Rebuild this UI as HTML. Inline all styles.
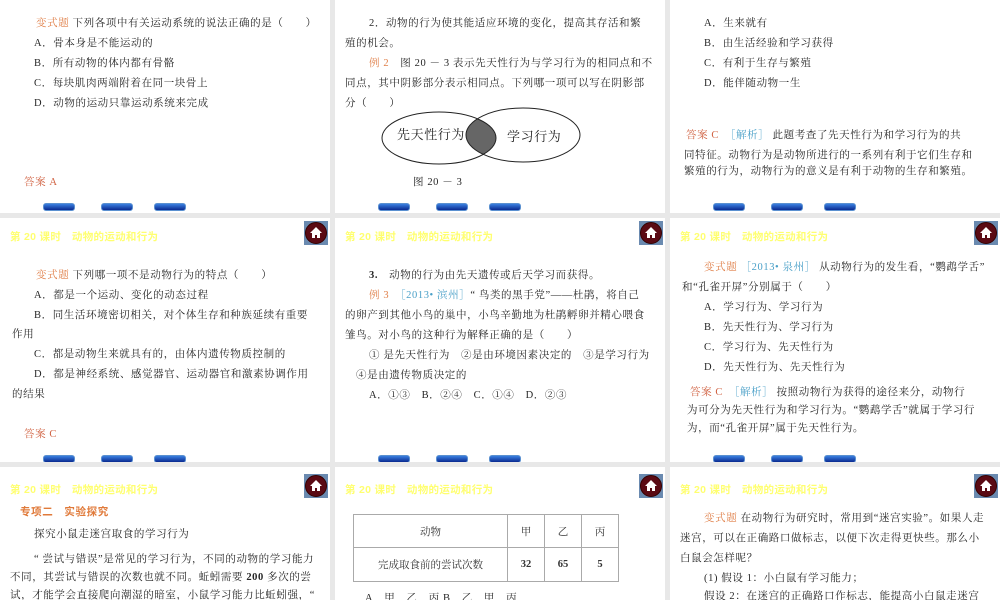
<!DOCTYPE html>
<html><head><meta charset="utf-8"><style>
*{margin:0;padding:0;box-sizing:border-box}
body{width:1000px;height:600px;background:#e8e8e8;position:relative;overflow:hidden;font-family:"Liberation Serif","Noto Serif CJK SC","Noto Sans CJK SC",serif;color:#262626}
.s{position:absolute;background:#fff;overflow:hidden}
.t{position:absolute;font-size:10.5px;letter-spacing:0.6px;white-space:nowrap;line-height:14px}
.o{color:#e0804a}
.b{color:#4aa0c8}
.r{color:#d06040}
.h{position:absolute;font-size:10.5px;color:#ffff70;font-family:"Liberation Sans","Noto Sans CJK SC",sans-serif;white-space:nowrap;font-weight:bold;letter-spacing:0.3px}
.btn{position:absolute;width:32px;height:8px;border-radius:3px;background:linear-gradient(#3a7fe0,#0a2a90);border:1px solid #5a90d0}
.home{position:absolute;width:24px;height:24px;background:#6a8ab0}
.home i{position:absolute;left:1px;top:1px;width:22px;height:22px;border-radius:50%;background:#5a0a14;border:1px solid #300}
.home svg{position:absolute;left:5px;top:5px}
</style></head><body>

<!-- Row 1 -->
<div class="s" style="left:0;top:0;width:330px;height:213px">
<div class="t" style="left:36px;top:17px"><span class="o">变式题</span> 下列各项中有关运动系统的说法正确的是（　　）</div>
<div class="t" style="left:34px;top:37px">A．骨本身是不能运动的</div>
<div class="t" style="left:34px;top:57px">B．所有动物的体内都有骨骼</div>
<div class="t" style="left:34px;top:77px">C．每块肌肉两端附着在同一块骨上</div>
<div class="t" style="left:34px;top:97px">D．动物的运动只靠运动系统来完成</div>
<div class="t r" style="left:24px;top:176px">答案 A</div>
<div class="btn" style="left:43px;top:203px"></div><div class="btn" style="left:101px;top:203px"></div><div class="btn" style="left:154px;top:203px"></div>
</div>

<div class="s" style="left:335px;top:0;width:330px;height:213px">
<div class="t" style="left:34px;top:17px">2．动物的行为使其能适应环境的变化，提高其存活和繁</div>
<div class="t" style="left:10px;top:37px">殖的机会。</div>
<div class="t" style="left:34px;top:57px"><span class="o">例 2</span>　图 20 － 3 表示先天性行为与学习行为的相同点和不</div>
<div class="t" style="left:10px;top:77px">同点，其中阴影部分表示相同点。下列哪一项可以写在阴影部</div>
<div class="t" style="left:10px;top:97px">分（　　）</div>
<svg style="position:absolute;left:0;top:0" width="330" height="213">
<defs><clipPath id="c"><ellipse cx="104" cy="138" rx="57" ry="26"/></clipPath></defs>
<ellipse cx="188" cy="135" rx="57" ry="27" fill="#666" clip-path="url(#c)"/>
<ellipse cx="104" cy="138" rx="57" ry="26" fill="none" stroke="#222" stroke-width="1"/>
<ellipse cx="188" cy="135" rx="57" ry="27" fill="none" stroke="#222" stroke-width="1"/>
</svg>
<div class="t" style="left:62px;top:128px;font-size:13px">先天性行为</div>
<div class="t" style="left:172px;top:130px;font-size:13px">学习行为</div>
<div class="t" style="left:78px;top:176px">图 20 － 3</div>
<div class="btn" style="left:43px;top:203px"></div><div class="btn" style="left:101px;top:203px"></div><div class="btn" style="left:154px;top:203px"></div>
</div>

<div class="s" style="left:670px;top:0;width:330px;height:213px">
<div class="t" style="left:34px;top:17px">A．生来就有</div>
<div class="t" style="left:34px;top:37px">B．由生活经验和学习获得</div>
<div class="t" style="left:34px;top:57px">C．有利于生存与繁殖</div>
<div class="t" style="left:34px;top:77px">D．能伴随动物一生</div>
<div class="t" style="left:16px;top:129px"><span class="r">答案 C</span>　<span class="b">［解析］</span> 此题考查了先天性行为和学习行为的共</div>
<div class="t" style="left:14px;top:149px">同特征。动物行为是动物所进行的一系列有利于它们生存和</div>
<div class="t" style="left:14px;top:165px">繁殖的行为，动物行为的意义是有利于动物的生存和繁殖。</div>
<div class="btn" style="left:43px;top:203px"></div><div class="btn" style="left:101px;top:203px"></div><div class="btn" style="left:154px;top:203px"></div>
</div>

<!-- Row 2 -->
<div class="s" style="left:0;top:218px;width:330px;height:244px">
<div class="h" style="left:10px;top:11px">第 20 课时　动物的运动和行为</div>
<div class="home" style="left:304px;top:3px"><i></i><svg width="14" height="13" viewBox="0 0 14 13"><path d="M7 1 L1 7 H3 V12 H6 V9 H8 V12 H11 V7 H13 Z" fill="#fff"/></svg></div>
<div class="t" style="left:36px;top:51px"><span class="o">变式题</span> 下列哪一项不是动物行为的特点（　　）</div>
<div class="t" style="left:34px;top:71px">A．都是一个运动、变化的动态过程</div>
<div class="t" style="left:34px;top:91px">B．同生活环境密切相关，对个体生存和种族延续有重要</div>
<div class="t" style="left:12px;top:110px">作用</div>
<div class="t" style="left:34px;top:130px">C．都是动物生来就具有的，由体内遗传物质控制的</div>
<div class="t" style="left:34px;top:150px">D．都是神经系统、感觉器官、运动器官和激素协调作用</div>
<div class="t" style="left:12px;top:170px">的结果</div>
<div class="t r" style="left:24px;top:210px">答案 C</div>
<div class="btn" style="left:43px;top:237px"></div><div class="btn" style="left:101px;top:237px"></div><div class="btn" style="left:154px;top:237px"></div>
</div>

<div class="s" style="left:335px;top:218px;width:330px;height:244px">
<div class="h" style="left:10px;top:11px">第 20 课时　动物的运动和行为</div>
<div class="home" style="left:304px;top:3px"><i></i><svg width="14" height="13" viewBox="0 0 14 13"><path d="M7 1 L1 7 H3 V12 H6 V9 H8 V12 H11 V7 H13 Z" fill="#fff"/></svg></div>
<div class="t" style="left:34px;top:51px"><b>3.</b>　动物的行为由先天遗传或后天学习而获得。</div>
<div class="t" style="left:34px;top:71px"><span class="o">例 3</span>　<span class="b">［2013• 滨州］</span>“ 鸟类的黑手党”——杜鹃，将自己</div>
<div class="t" style="left:10px;top:91px">的卵产到其他小鸟的巢中，小鸟辛勤地为杜鹃孵卵并精心喂食</div>
<div class="t" style="left:10px;top:111px">雏鸟。对小鸟的这种行为解释正确的是（　　）</div>
<div class="t" style="left:34px;top:131px">① 是先天性行为　②是由环境因素决定的　③是学习行为</div>
<div class="t" style="left:21px;top:151px">④是由遗传物质决定的</div>
<div class="t" style="left:34px;top:171px">A．①③　B．②④　C．①④　D．②③</div>
<div class="btn" style="left:43px;top:237px"></div><div class="btn" style="left:101px;top:237px"></div><div class="btn" style="left:154px;top:237px"></div>
</div>

<div class="s" style="left:670px;top:218px;width:330px;height:244px">
<div class="h" style="left:10px;top:11px">第 20 课时　动物的运动和行为</div>
<div class="home" style="left:304px;top:3px"><i></i><svg width="14" height="13" viewBox="0 0 14 13"><path d="M7 1 L1 7 H3 V12 H6 V9 H8 V12 H11 V7 H13 Z" fill="#fff"/></svg></div>
<div class="t" style="left:34px;top:43px"><span class="o">变式题</span> <span class="b">［2013• 泉州］</span> 从动物行为的发生看，“鹦鹉学舌”</div>
<div class="t" style="left:12px;top:63px">和“孔雀开屏”分别属于（　　）</div>
<div class="t" style="left:34px;top:83px">A．学习行为、学习行为</div>
<div class="t" style="left:34px;top:103px">B．先天性行为、学习行为</div>
<div class="t" style="left:34px;top:123px">C．学习行为、先天性行为</div>
<div class="t" style="left:34px;top:143px">D．先天性行为、先天性行为</div>
<div class="t" style="left:20px;top:168px"><span class="r">答案 C</span>　<span class="b">［解析］</span> 按照动物行为获得的途径来分，动物行</div>
<div class="t" style="left:17px;top:186px">为可分为先天性行为和学习行为。“鹦鹉学舌”就属于学习行</div>
<div class="t" style="left:17px;top:204px">为，而“孔雀开屏”属于先天性行为。</div>
<div class="btn" style="left:43px;top:237px"></div><div class="btn" style="left:101px;top:237px"></div><div class="btn" style="left:154px;top:237px"></div>
</div>

<!-- Row 3 -->
<div class="s" style="left:0;top:467px;width:330px;height:133px">
<div class="h" style="left:10px;top:15px">第 20 课时　动物的运动和行为</div>
<div class="home" style="left:304px;top:7px"><i></i><svg width="14" height="13" viewBox="0 0 14 13"><path d="M7 1 L1 7 H3 V12 H6 V9 H8 V12 H11 V7 H13 Z" fill="#fff"/></svg></div>
<div class="t" style="left:20px;top:38px;color:#e07a3a;font-weight:bold;font-family:'Liberation Sans','Noto Sans CJK SC',sans-serif">专项二　实验探究</div>
<div class="t" style="left:34px;top:61px">探究小鼠走迷宫取食的学习行为</div>
<div class="t" style="left:34px;top:86px">“ 尝试与错误”是常见的学习行为，不同的动物的学习能力</div>
<div class="t" style="left:10px;top:104px">不同，其尝试与错误的次数也就不同。蚯蚓需要 <b>200</b> 多次的尝</div>
<div class="t" style="left:10px;top:122px">试，才能学会直接爬向潮湿的暗室，小鼠学习能力比蚯蚓强，“</div>
</div>

<div class="s" style="left:335px;top:467px;width:330px;height:133px">
<div class="h" style="left:10px;top:15px">第 20 课时　动物的运动和行为</div>
<div class="home" style="left:304px;top:7px"><i></i><svg width="14" height="13" viewBox="0 0 14 13"><path d="M7 1 L1 7 H3 V12 H6 V9 H8 V12 H11 V7 H13 Z" fill="#fff"/></svg></div>
<table style="position:absolute;left:18px;top:47px;border-collapse:collapse;font-size:10.5px;color:#333" >
<tr style="height:33px"><td style="border:1px solid #aaa;width:154px;text-align:center">动物</td><td style="border:1px solid #aaa;width:37px;text-align:center">甲</td><td style="border:1px solid #aaa;width:37px;text-align:center">乙</td><td style="border:1px solid #aaa;width:37px;text-align:center">丙</td></tr>
<tr style="height:34px"><td style="border:1px solid #aaa;text-align:center">完成取食前的尝试次数</td><td style="border:1px solid #aaa;text-align:center;font-weight:bold">32</td><td style="border:1px solid #aaa;text-align:center;font-weight:bold">65</td><td style="border:1px solid #aaa;text-align:center;font-weight:bold">5</td></tr>
</table>
<div class="t" style="left:30px;top:125px">A．甲　乙　丙 B．乙　甲　丙</div>
</div>

<div class="s" style="left:670px;top:467px;width:330px;height:133px">
<div class="h" style="left:10px;top:15px">第 20 课时　动物的运动和行为</div>
<div class="home" style="left:304px;top:7px"><i></i><svg width="14" height="13" viewBox="0 0 14 13"><path d="M7 1 L1 7 H3 V12 H6 V9 H8 V12 H11 V7 H13 Z" fill="#fff"/></svg></div>
<div class="t" style="left:34px;top:45px"><span class="o">变式题</span> 在动物行为研究时，常用到“迷宫实验”。如果人走</div>
<div class="t" style="left:10px;top:65px">迷宫，可以在正确路口做标志，以便下次走得更快些。那么小</div>
<div class="t" style="left:10px;top:85px">白鼠会怎样呢？</div>
<div class="t" style="left:34px;top:105px">(1) 假设 1：小白鼠有学习能力；</div>
<div class="t" style="left:34px;top:123px">假设 2：在迷宫的正确路口作标志，能提高小白鼠走迷宫</div>
</div>

</body></html>
